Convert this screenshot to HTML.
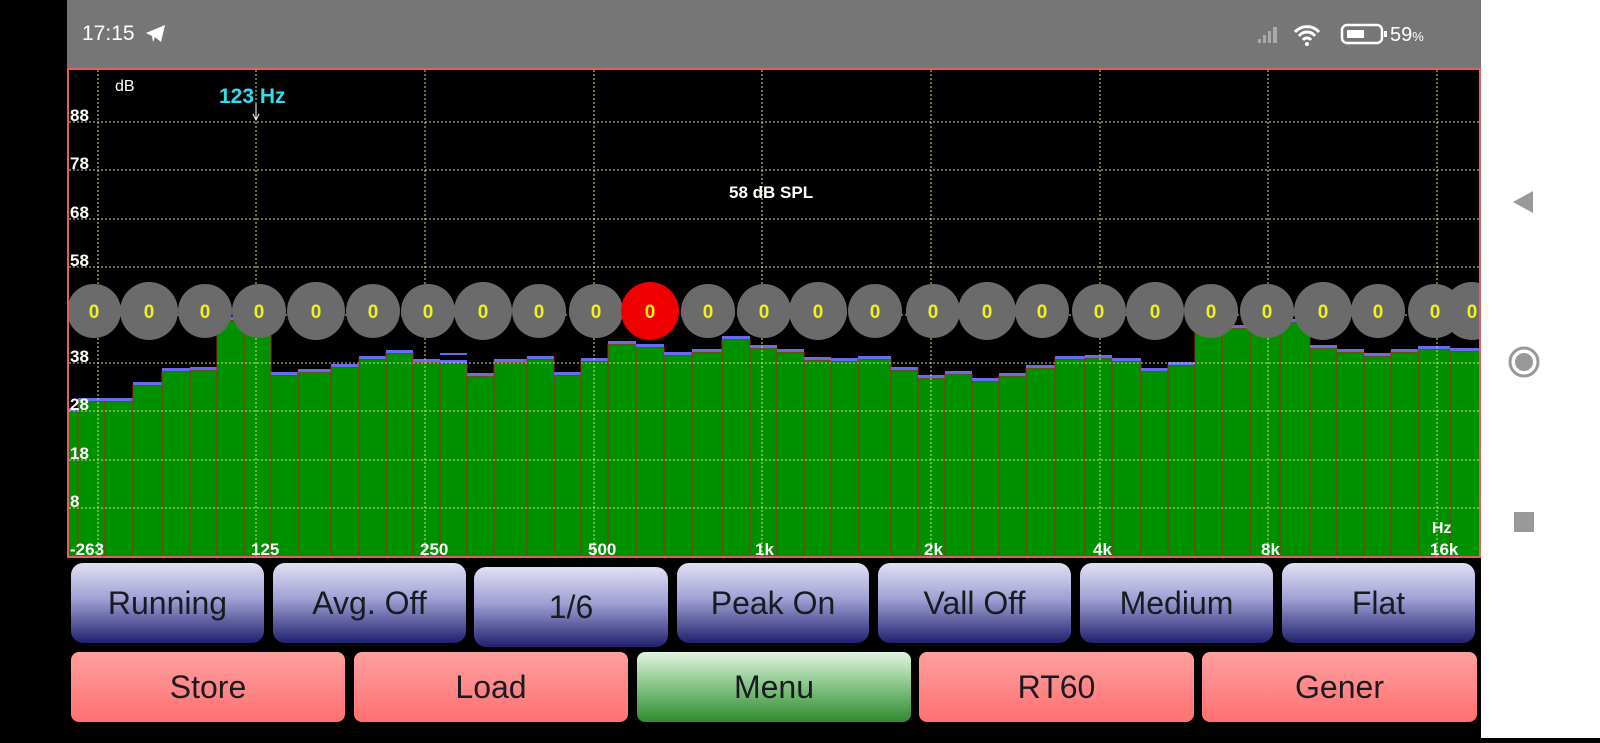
<!DOCTYPE html>
<html><head><meta charset="utf-8"><style>
*{margin:0;padding:0;box-sizing:border-box}
body{width:1600px;height:738px;background:#000;position:relative;overflow:hidden;font-family:"Liberation Sans",sans-serif}
.sb{position:absolute;left:67px;top:0;width:1414px;height:68px;background:#767676;color:#fff}
.nav{position:absolute;left:1481px;top:0;width:119px;height:738px;background:#fff}
.chart{position:absolute;left:67px;top:68px;width:1414px;height:490px;background:#000;border:2px solid #e06060;overflow:hidden}
.btn{position:absolute;border-radius:12px;display:flex;align-items:center;justify-content:center;font-size:32px;color:#1a1a22;font-family:"Liberation Sans Narrow","Liberation Sans",sans-serif}
.b1{top:563px;height:80px;background:linear-gradient(#e0e0f4,#a0a0d4 45%,#20206e)}
.b2{top:652px;height:70px;border-radius:8px;background:linear-gradient(#ffa0a0,#ff7070)}
.g{background:linear-gradient(#e2f4e2,#8cc88c 45%,#2e8a2e)}
</style></head><body>
<div class="sb">
<div style="position:absolute;left:15px;top:22px;font-size:21px">17:15</div>
<svg style="position:absolute;left:78px;top:24px" width="22" height="20" viewBox="0 0 22 20"><path d="M1 9 L20 1 L16 18 L10 13 L8 18 L7 12 Z" fill="#fff"/></svg>
<svg style="position:absolute;left:1188px;top:22px" width="180" height="26" viewBox="0 0 180 26">
<g fill="#aaa"><rect x="3" y="17" width="3" height="4"/><rect x="8" y="13" width="3" height="8"/><rect x="13" y="9" width="3" height="12"/><rect x="18" y="5" width="4" height="16"/></g>
<path d="M40 10 a16 16 0 0 1 24 0 M44 14 a10 10 0 0 1 16 0 M48 18 a5 5 0 0 1 8 0" stroke="#fff" stroke-width="3" fill="none"/>
<circle cx="52" cy="22" r="2" fill="#fff"/>
<rect x="87" y="3" width="40" height="18" rx="5" stroke="#fff" stroke-width="2.5" fill="none"/>
<rect x="92" y="8" width="17" height="8" fill="#fff"/><rect x="129" y="9" width="3" height="6" fill="#fff"/>
<text x="135" y="19" fill="#fff" font-size="20" font-family="Liberation Sans">59<tspan font-size="13">%</tspan></text>
</svg>
</div>
<div class="chart"><svg id="c" width="1410" height="486" viewBox="69 70 1410 486"></svg></div>
<div class="nav">
<svg width="119" height="738"><path d="M32 202 L52 191 L52 213 Z" fill="#999"/><circle cx="43" cy="362" r="14" stroke="#999" stroke-width="3" fill="none"/><circle cx="43" cy="362" r="9" fill="#999"/><rect x="33" y="512" width="20" height="20" fill="#999"/></svg>
</div>
<div class="btn b1" style="left:71px;width:193px">Running</div>
<div class="btn b1" style="left:273px;width:193px">Avg. Off</div>
<div class="btn b1" style="left:474px;width:194px;top:567px">1/6</div>
<div class="btn b1" style="left:677px;width:192px">Peak On</div>
<div class="btn b1" style="left:878px;width:193px">Vall Off</div>
<div class="btn b1" style="left:1080px;width:193px">Medium</div>
<div class="btn b1" style="left:1282px;width:193px">Flat</div>
<div class="btn b2" style="left:71px;width:274px">Store</div>
<div class="btn b2" style="left:354px;width:274px">Load</div>
<div class="btn b2 g" style="left:637px;width:274px">Menu</div>
<div class="btn b2" style="left:919px;width:275px">RT60</div>
<div class="btn b2" style="left:1202px;width:275px">Gener</div>
<script>
var s='';
var B=[[68,411],[78,401],[105,401],[133,385],[162,371],[190,370],[217,320],[244,320],[271,375],[298,372],[331,367],[359,359],[386,353],[413,362],[440,363],[467,376],[494,362],[527,359],[554,375],[581,361],[608,344],[636,347],[664,355],[692,352],[722,339],[750,348],[777,352],[804,360],[831,361],[858,359],[891,370],[918,378],[945,374],[972,381],[999,376],[1026,368],[1055,359],[1085,358],[1112,361],[1141,371],[1168,365],[1195,330],[1222,328],[1250,330],[1280,322],[1310,348],[1337,352],[1364,356],[1391,352],[1418,349],[1450,351],[1480,0]];
for(var i=0;i<B.length-1;i++){var x=B[i][0],w=B[i+1][0]-x,y=B[i][1];
s+='<rect x="'+x+'" y="'+y+'" width="'+w+'" height="'+(560-y)+'" fill="#009100" stroke="#b02020" stroke-width="1"/>';
s+='<rect x="'+x+'" y="'+(y-3)+'" width="'+w+'" height="3" fill="#6a6af0"/>';}
s+='<rect x="440" y="353" width="27" height="2" fill="#6a6af0"/>';
var H=[122,170,219,267,315,363,411,460,508];
H.forEach(function(y){s+='<line x1="69" x2="1480" y1="'+y+'" y2="'+y+'" stroke="#d8d890" stroke-width="1" stroke-dasharray="2,2"/>'});
[98,256,425,594,762,931,1100,1268,1437].forEach(function(x){s+='<line x1="'+x+'" x2="'+x+'" y1="70" y2="556" stroke="#d8d890" stroke-width="1" stroke-dasharray="2,2"/>'});
var L=['88','78','68','58','48','38','28','18','8'];
L.forEach(function(t,i){if(t!='48')s+='<text x="70" y="'+(H[i]-1)+'" fill="#fff" font-size="17" font-weight="bold">'+t+'</text>'});
s+='<text x="70" y="555" fill="#fff" font-size="17" font-weight="bold">-263</text>';
[['125',251],['250',420],['500',588],['1k',755],['2k',924],['4k',1093],['8k',1261],['16k',1430]].forEach(function(a){s+='<text x="'+a[1]+'" y="555" fill="#fff" font-size="17" font-weight="bold">'+a[0]+'</text>'});
s+='<text x="1432" y="533" fill="#fff" font-size="16" font-weight="bold">Hz</text>';
s+='<text x="115" y="91" fill="#fff" font-size="16">dB</text>';
s+='<text x="219" y="103" fill="#33ddee" font-size="21" font-weight="bold">123 Hz</text>';
s+='<text x="729" y="198" fill="#fff" font-size="17" font-weight="bold">58 dB SPL</text>';
s+='<path d="M256 104 v14 M253 114 l3 6 l3 -6" stroke="#fff" fill="none"/>';
var C=[94,149,205,259,316,373,428,483,539,596,650,708,764,818,875,933,987,1042,1099,1155,1211,1267,1323,1378,1435,1472];
C.forEach(function(x,i){var r=(i%3==1)?29:27;s+='<circle cx="'+x+'" cy="311" r="'+r+'" fill="'+(i==10?'#f00000':'#6b6b6b')+'"/><text x="'+x+'" y="318" fill="#f0f020" font-size="19" font-weight="bold" text-anchor="middle">0</text>'});
document.getElementById('c').innerHTML=s;
</script>
</body></html>
